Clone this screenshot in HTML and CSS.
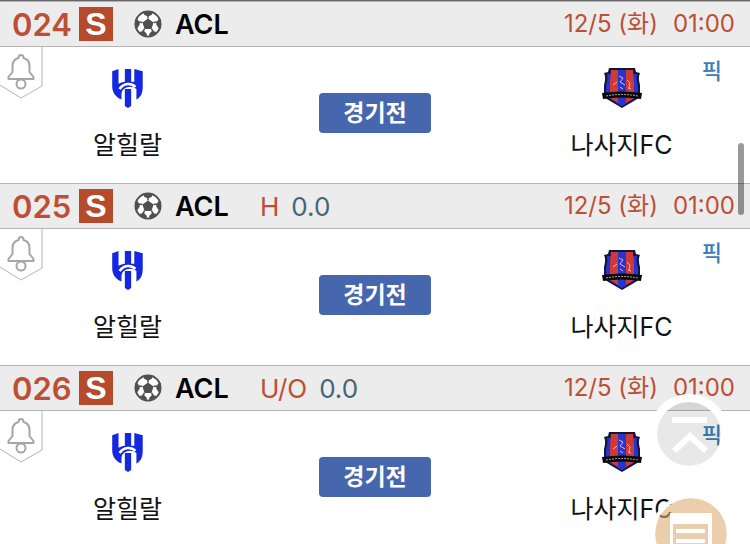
FILE: index.html
```
<!DOCTYPE html>
<html lang="ko">
<head>
    <meta charset="UTF-8">
    <meta name="viewport" content="width=device-width, initial-scale=1">
    <title>경기 목록</title>
    <link rel="stylesheet" href="styles.css">
</head>
<body>
    <svg class="defs" aria-hidden="true">
        <symbol id="ball" viewBox="0 0 28 28">
            <circle cx="14" cy="14" r="12.500" fill="#fff" stroke="#505050" stroke-width="2"/>
            <path fill="#505050" d="M14 8.500l5.500 4-2 6.500h-7l-2-6.500zM8.500 1.500h11L17.500 5 14 6.500 10.500 5zM1 9l3 .5L6 14l-2.500 4L1 18.500zM27 9l-3 .5-2 4.500 2.500 4 2.500.5zM5 22l5-1 3 3-1 3.500zM23 22l-5-1-3 3 1 3.500z"/>
            <path fill="none" stroke="#505050" stroke-width="1.500" d="M14 8.500V6M19.500 12.500L23 12M17.500 19l2 3M10.500 19l-2 3M8.500 12.500L5 12"/>
        </symbol>
        <symbol id="bell" viewBox="0 0 28 36">
            <path fill="#fff" stroke="#a6a6a6" stroke-width="2" stroke-linejoin="round" d="M14 1c-2 0-2.500 1-2.500 3C7.500 5 5.500 8 5.500 12v6L1.500 23v2h25v-2l-4-5v-6c0-4-2-7-6-8 0-2-.5-3-2.500-3z"/>
            <circle cx="14" cy="30" r="4.500" fill="#fff" stroke="#a6a6a6" stroke-width="2"/>
        </symbol>
        <symbol id="hilal" viewBox="0 0 30 38">
            <path fill="#1428e0" d="M0 3l6-2v14c2-1 4-2 6-2V1h6v12h3V1l8 2v14c0 6-1 10-6 13V20c-4-3-8-3-12 0-1 1-2 2-2 4v6C2 27 0 22 0 17z"/>
            <path fill="#1428e0" d="M12 20h6v16l-3 2-3-2z"/>
            <path fill="none" stroke="#fff" stroke-width="2.500" d="M7 20c4-6 11-6 15-2"/>
            <path fill="none" stroke="#fff" stroke-width="2" d="M10 24v8M20 21v12"/>
        </symbol>
        <symbol id="nasaji" viewBox="0 0 40 40">
            <path fill="#15153a" d="M7 0h26l1 4 4 1c-2 4-1 8 0 12v12c-5 4-12 7-18 11C14 36 7 33 2 29V17c1-4 2-8 0-12l4-1z"/>
            <path fill="#2734cf" d="M5 6h30c-1 4 0 8 1 12v10c-4 3-10 6-16 10C14 34 8 31 4 28V18C5 14 6 10 5 6z"/>
            <path fill="#cf3a34" d="M9 2h7v33l-8-5V14zM24 2h7l1 12v16l-8 5z"/>
            <path fill="#2734cf" d="M16 2h8v34l-4 2-4-2z"/>
            <path fill="none" stroke="#e3b4d2" d="M17 8l4 2-3 4 5 3M25 12l3 3-1 5M11 17l4-3M26 20l3 1M18 19l3 2"/>
            <path fill="#090909" d="M0 25q20-3 40 0l-1 6q-19-3-38 0z"/>
            <path fill="none" stroke="#aaa" stroke-dasharray="2 1" d="M4 28q16-3 32 0"/>
        </symbol>
    </svg>

    <main class="matches">
        <article class="match">
            <header class="match-head">
                <span class="number">024</span>
                <span class="type">S</span>
                <svg class="ball"><use href="#ball"/></svg>
                <span class="league">ACL</span>
                <time class="date"><span>12/5 (화)</span><span>01:00</span></time>
            </header>
            <div class="match-body">
                <button class="alarm" aria-label="알림">
                    <svg class="tag" viewBox="0 0 43 52"><path d="M42 0v39L21 51 0 38"/></svg>
                    <svg class="bell"><use href="#bell"/></svg>
                </button>
                <div class="team">
                    <svg class="emblem"><use href="#hilal"/></svg>
                    <span>알힐랄</span>
                </div>
                <button class="status">경기전</button>
                <div class="team">
                    <svg class="emblem"><use href="#nasaji"/></svg>
                    <span>나사지FC</span>
                </div>
                <a class="pick" href="#">픽</a>
            </div>
        </article>

        <article class="match">
            <header class="match-head">
                <span class="number">025</span>
                <span class="type">S</span>
                <svg class="ball"><use href="#ball"/></svg>
                <span class="league">ACL</span>
                <span class="rule">H</span>
                <span class="value">0.0</span>
                <time class="date"><span>12/5 (화)</span><span>01:00</span></time>
            </header>
            <div class="match-body">
                <button class="alarm" aria-label="알림">
                    <svg class="tag" viewBox="0 0 43 52"><path d="M42 0v39L21 51 0 38"/></svg>
                    <svg class="bell"><use href="#bell"/></svg>
                </button>
                <div class="team">
                    <svg class="emblem"><use href="#hilal"/></svg>
                    <span>알힐랄</span>
                </div>
                <button class="status">경기전</button>
                <div class="team">
                    <svg class="emblem"><use href="#nasaji"/></svg>
                    <span>나사지FC</span>
                </div>
                <a class="pick" href="#">픽</a>
            </div>
        </article>

        <article class="match">
            <header class="match-head">
                <span class="number">026</span>
                <span class="type">S</span>
                <svg class="ball"><use href="#ball"/></svg>
                <span class="league">ACL</span>
                <span class="rule">U/O</span>
                <span class="value">0.0</span>
                <time class="date"><span>12/5 (화)</span><span>01:00</span></time>
            </header>
            <div class="match-body">
                <button class="alarm" aria-label="알림">
                    <svg class="tag" viewBox="0 0 43 52"><path d="M42 0v39L21 51 0 38"/></svg>
                    <svg class="bell"><use href="#bell"/></svg>
                </button>
                <div class="team">
                    <svg class="emblem"><use href="#hilal"/></svg>
                    <span>알힐랄</span>
                </div>
                <button class="status">경기전</button>
                <div class="team">
                    <svg class="emblem"><use href="#nasaji"/></svg>
                    <span>나사지FC</span>
                </div>
                <a class="pick" href="#">픽</a>
            </div>
        </article>
    </main>

    <div class="scrollbar"></div>
    <button class="float to-top" aria-label="맨 위로">
        <svg viewBox="0 0 64 64"><path fill="none" stroke="#fff" stroke-width="6" d="M15 18h35M17 49l16-15 16 15"/></svg>
    </button>
    <button class="float slip" aria-label="목록">
        <svg viewBox="0 0 72 72">
            <path fill="#fff" d="M15 15h42v44H15z"/>
            <path fill="#ebcfac" d="M18 26h35v30H18z"/>
            <path fill="#fff" d="M21 31h29v4H21zM21 41h29v4H21z"/>
        </svg>
    </button>
</body>
</html>
```

FILE: styles.css
```
body {
    margin: 0;
    height: 100vh;
    overflow: hidden;
    background-color: #fff;
    color: #111;
    font-family: Inter, "Noto Sans CJK KR", sans-serif;
    font-size: 24px;
}

button {
    padding: 0;
    border: none;
    font-family: inherit;
    cursor: pointer;
}

.defs {
    display: none;
}

.matches {
    border-top: 1px solid #666;
}

.match-head {
    display: flex;
    align-items: center;
    height: 46px;
    box-sizing: border-box;
    padding: 0 15px 0 12px;
    background-color: #ececec;
    border-top: 1px solid #b4b4b4;
    border-bottom: 1px solid #b4b4b4;
}

.number {
    width: 67px;
    color: #bd4f34;
    font-size: 31px;
    font-weight: 600;
}

.type {
    width: 34px;
    background-color: #b54a2d;
    color: #fff;
    font-family: "Liberation Sans", sans-serif;
    font-size: 32px;
    font-weight: 700;
    line-height: 34px;
    text-align: center;
}

.ball {
    width: 28px;
    height: 28px;
    margin: 0 13px 0 21px;
}

.league {
    width: 85px;
    color: #000;
    font-size: 27px;
    font-weight: 600;
}

.rule {
    margin-right: 12px;
    color: #bd4f34;
    font-size: 26px;
}

.value {
    color: #446678;
    font-size: 26px;
}

.date {
    display: flex;
    gap: 15px;
    margin-left: auto;
    color: #bd4f34;
    line-height: 42px;
}

.match-body {
    position: relative;
    display: grid;
    grid-template-columns: 1fr 112px 1fr;
    align-items: start;
    height: 136px;
    box-sizing: border-box;
    padding: 21px 1px 0;
}

.alarm {
    position: absolute;
    top: 0;
    left: 0;
    width: 43px;
    height: 52px;
    background: none;
}

.tag {
    display: block;
    width: 43px;
    height: 52px;
    fill: none;
    stroke: #b4b4b4;
}

.bell {
    position: absolute;
    top: 7px;
    left: 7px;
    width: 28px;
    height: 36px;
}

.team {
    display: flex;
    flex-direction: column;
    align-items: center;
    gap: 19px;
    padding-right: 65px;
    font-size: 25px;
    line-height: 36px;
}

.status + .team {
    padding: 0 0 0 63px;
}

.emblem {
    width: 40px;
    height: 40px;
}

.status {
    height: 40px;
    margin-top: 25px;
    border-radius: 4px;
    background-color: #4666ad;
    color: #fff;
    font-size: 23px;
    font-weight: 700;
    line-height: 38px;
}

.pick {
    position: absolute;
    top: 6px;
    right: 28px;
    color: #3a80bd;
    font-size: 22px;
    font-weight: 500;
    text-decoration: none;
}

.scrollbar {
    position: fixed;
    top: 143px;
    right: 6px;
    width: 6px;
    height: 72px;
    border-radius: 3px;
    background-color: rgba(0, 0, 0, 0.4);
}

.float {
    position: fixed;
    width: 80px;
    height: 80px;
    box-sizing: border-box;
    border-radius: 50%;
    background-clip: padding-box;
}

.float svg {
    display: block;
    width: 100%;
}

.to-top {
    right: 21px;
    bottom: 70px;
    border: 8px solid #fff;
    background-color: rgba(0, 0, 0, 0.09);
}

.slip {
    right: 19px;
    bottom: -30px;
    border: 4px solid #fff;
    background-color: rgba(222, 175, 117, 0.6);
}
```
